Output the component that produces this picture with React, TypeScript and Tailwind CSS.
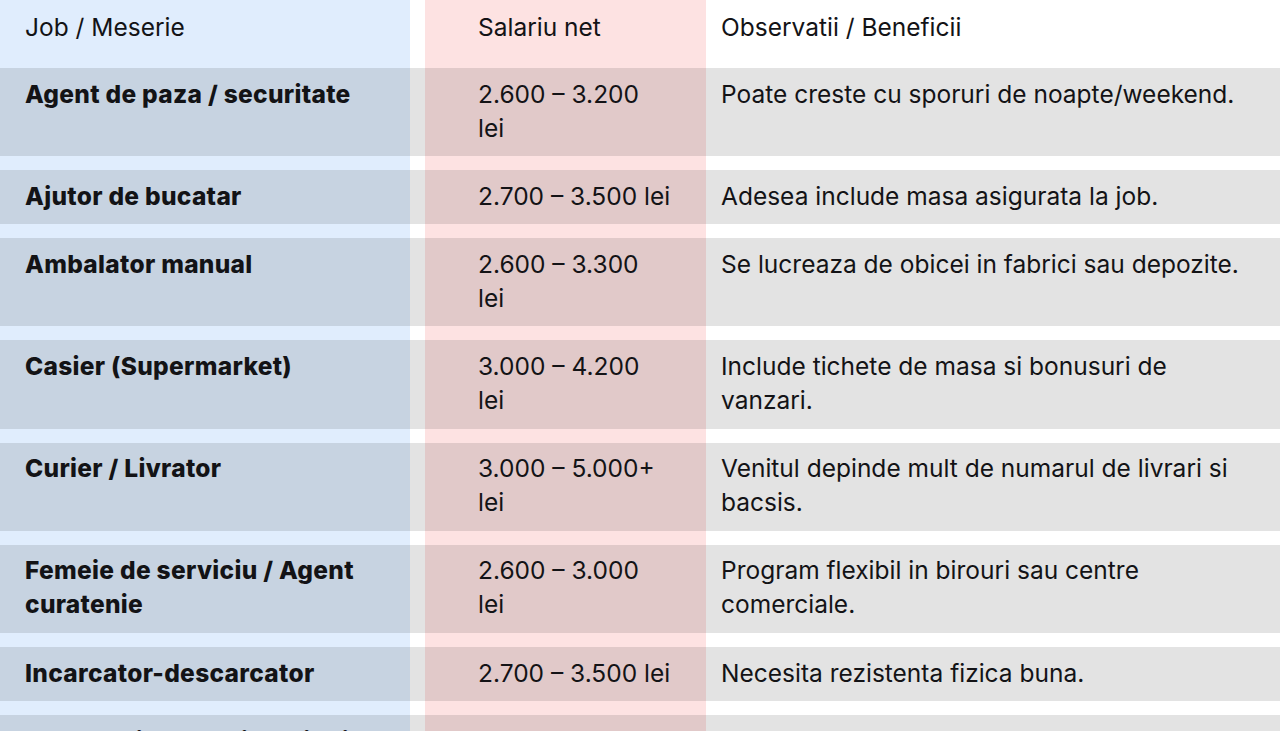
type Row = {
  job: string[];
  salary: string[];
  notes: string[];
};

const rows: Row[] = [
  {
    job: ["Agent de paza / securitate"],
    salary: ["2.600 – 3.200", "lei"],
    notes: ["Poate creste cu sporuri de noapte/weekend."],
  },
  {
    job: ["Ajutor de bucatar"],
    salary: ["2.700 – 3.500 lei"],
    notes: ["Adesea include masa asigurata la job."],
  },
  {
    job: ["Ambalator manual"],
    salary: ["2.600 – 3.300", "lei"],
    notes: ["Se lucreaza de obicei in fabrici sau depozite."],
  },
  {
    job: ["Casier (Supermarket)"],
    salary: ["3.000 – 4.200", "lei"],
    notes: ["Include tichete de masa si bonusuri de", "vanzari."],
  },
  {
    job: ["Curier / Livrator"],
    salary: ["3.000 – 5.000+", "lei"],
    notes: ["Venitul depinde mult de numarul de livrari si", "bacsis."],
  },
  {
    job: ["Femeie de serviciu / Agent", "curatenie"],
    salary: ["2.600 – 3.000", "lei"],
    notes: ["Program flexibil in birouri sau centre", "comerciale."],
  },
  {
    job: ["Incarcator-descarcator"],
    salary: ["2.700 – 3.500 lei"],
    notes: ["Necesita rezistenta fizica buna."],
  },
  {
    job: ["Lucrator in depozit / stivuitor"],
    salary: ["3.100 – 3.600 lei"],
    notes: ["Munca pe ture, de obicei cu bonusuri lunare."],
  },
];

function Lines({ lines }: { lines: string[] }) {
  return (
    <>
      {lines.map((l, i) => (
        <div key={i} className="whitespace-nowrap">
          {l}
        </div>
      ))}
    </>
  );
}

// one cell of a body row: column colour around, grey shade on the content part
function Cell({ bg, pad, children }: { bg: string; pad: string; children?: React.ReactNode }) {
  return (
    <div className={`flex flex-col pb-[14px] ${bg}`}>
      <div className={`flex-1 bg-black/[0.11] pt-[8.5px] pb-[11.5px] ${pad}`}>{children}</div>
    </div>
  );
}

export default function App() {
  return (
    <div
      className="min-h-screen w-full bg-white text-[24.5px] leading-[34.1px] text-[#131316]"
      style={{ fontFamily: "Inter, 'Noto Sans', sans-serif" }}
    >
      <div className="grid grid-cols-[410px_15px_281px_1fr]">
        {/* header */}
        <div className="h-[68px] bg-[#e0edfd] pl-[25px] pt-[10px]">Job / Meserie</div>
        <div className="h-[68px] bg-white" />
        <div className="h-[68px] bg-[#fde2e2] pl-[53px] pt-[10px]">Salariu net</div>
        <div className="h-[68px] bg-white pl-[15px] pt-[10px]">Observatii / Beneficii</div>

        {rows.map((r, i) => (
          <div key={i} className="contents">
            <Cell bg="bg-[#e0edfd]" pad="pl-[25px] font-extrabold tracking-[0.3px]">
              <Lines lines={r.job} />
            </Cell>
            <Cell bg="bg-white" pad="" />
            <Cell bg="bg-[#fde2e2]" pad="pl-[53px]">
              <Lines lines={r.salary} />
            </Cell>
            <Cell bg="bg-white" pad="pl-[15px]">
              <Lines lines={r.notes} />
            </Cell>
          </div>
        ))}
      </div>
    </div>
  );
}
